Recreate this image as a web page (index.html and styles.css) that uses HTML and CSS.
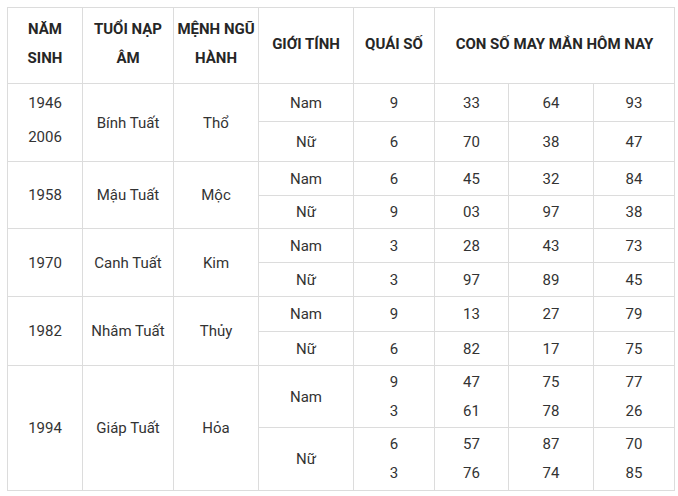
FILE: index.html
```html
<!DOCTYPE html>
<html lang="vi">
<head>
<meta charset="utf-8">
<link rel="stylesheet" href="styles.css">
</head>
<body>
<table class="lucky">
  <colgroup>
    <col class="c1"><col class="c2"><col class="c3"><col class="c4"><col class="c5"><col class="c6"><col class="c7"><col class="c8">
  </colgroup>
  <thead>
    <tr class="r-head">
      <th>NĂM<br>SINH</th>
      <th>TUỔI NẠP<br>ÂM</th>
      <th>MỆNH NGŨ<br>HÀNH</th>
      <th>GIỚI TÍNH</th>
      <th>QUÁI SỐ</th>
      <th colspan="3">CON SỐ MAY MẮN HÔM NAY</th>
    </tr>
  </thead>
  <tbody>
    <tr class="r38">
      <td rowspan="2" class="two">1946<br>2006</td>
      <td rowspan="2">Bính Tuất</td>
      <td rowspan="2">Thổ</td>
      <td>Nam</td><td>9</td><td>33</td><td>64</td><td>93</td>
    </tr>
    <tr class="r40">
      <td>Nữ</td><td>6</td><td>70</td><td>38</td><td>47</td>
    </tr>
    <tr class="r34">
      <td rowspan="2">1958</td>
      <td rowspan="2">Mậu Tuất</td>
      <td rowspan="2">Mộc</td>
      <td>Nam</td><td>6</td><td>45</td><td>32</td><td>84</td>
    </tr>
    <tr class="r33">
      <td>Nữ</td><td>9</td><td>03</td><td>97</td><td>38</td>
    </tr>
    <tr class="r34">
      <td rowspan="2">1970</td>
      <td rowspan="2">Canh Tuất</td>
      <td rowspan="2">Kim</td>
      <td>Nam</td><td>3</td><td>28</td><td>43</td><td>73</td>
    </tr>
    <tr class="r34">
      <td>Nữ</td><td>3</td><td>97</td><td>89</td><td>45</td>
    </tr>
    <tr class="r35">
      <td rowspan="2">1982</td>
      <td rowspan="2">Nhâm Tuất</td>
      <td rowspan="2">Thủy</td>
      <td>Nam</td><td>9</td><td>13</td><td>27</td><td>79</td>
    </tr>
    <tr class="r34">
      <td>Nữ</td><td>6</td><td>82</td><td>17</td><td>75</td>
    </tr>
    <tr class="r62">
      <td rowspan="2">1994</td>
      <td rowspan="2">Giáp Tuất</td>
      <td rowspan="2">Hỏa</td>
      <td>Nam</td><td class="multi">9<br>3</td><td class="multi">47<br>61</td><td class="multi">75<br>78</td><td class="multi">77<br>26</td>
    </tr>
    <tr class="r63">
      <td>Nữ</td><td class="multi">6<br>3</td><td class="multi">57<br>76</td><td class="multi">87<br>74</td><td class="multi">70<br>85</td>
    </tr>
  </tbody>
</table>
</body>
</html>
```

FILE: styles.css
```css
html, body {
  margin: 0;
  padding: 0;
  background: #ffffff;
}
body {
  padding: 7px 0 0 7px;
  font-family: Roboto, "Liberation Sans", Arial, sans-serif;
  color: #333333;
}
.lucky {
  border-collapse: collapse;
  table-layout: fixed;
  width: 667px;
  font-size: 15px;
}
.lucky th, .lucky td {
  border: 1px solid #dcdcdc;
  padding: 0;
  text-align: center;
  vertical-align: middle;
}
.lucky th {
  font-weight: 700;
  color: #262626;
  line-height: 29px;
}
.lucky td {
  line-height: 20px;
}
.c1 { width: 75px; }
.c2 { width: 91px; }
.c3 { width: 85px; }
.c4 { width: 95px; }
.c5 { width: 81px; }
.c6 { width: 74px; }
.c7 { width: 85px; }
.c8 { width: 81px; }
.r-head { height: 76px; }
.r-head th { padding-bottom: 3px; }
.r38 { height: 38px; }
.r40 { height: 40px; }
.r33 { height: 33px; }
.r34 { height: 34px; }
.r35 { height: 35px; }
.r62 { height: 62px; }
.r63 { height: 63px; }
.lucky td.two {
  line-height: 34px;
  padding-bottom: 6px;
}
.lucky td.multi {
  line-height: 29px;
}
```
